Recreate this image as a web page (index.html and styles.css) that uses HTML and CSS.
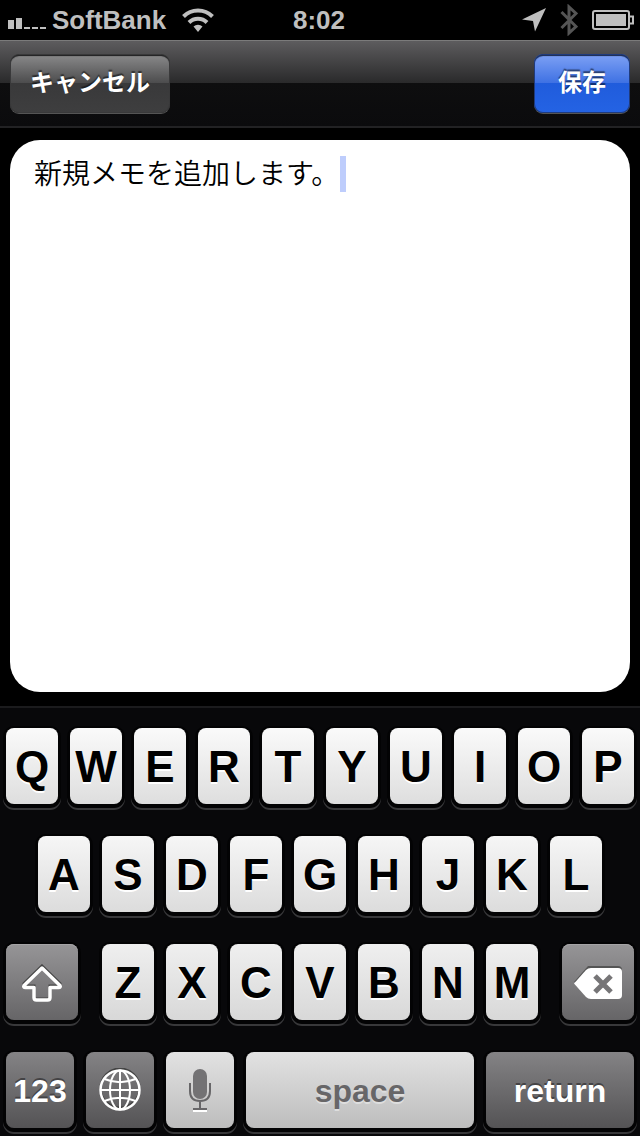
FILE: index.html
```html
<!DOCTYPE html>
<html lang="ja">
<head>
  <meta charset="UTF-8" />
  <meta name="viewport" content="width=device-width, initial-scale=1" />
  <title>新規メモ</title>
  <link rel="stylesheet" href="styles.css">
</head>
<body>
  <div class="statusbar">
    <div class="status-left">
      <svg class="signal" width="38" height="12" viewBox="0 0 38 12">
        <path d="M0 3h6v9H0zM8 1h6v11H8zM16 10h6v2h-6zM24 10h6v2h-6zM32 10h6v2h-6z" />
      </svg>
      <span>SoftBank</span>
      <svg class="wifi" width="32" height="24" viewBox="0 0 32 24">
        <path d="M1.5 8.5a20.500 20.500 0 0 1 29 0" fill="none" stroke="#bfbfbf" stroke-width="4" />
        <path d="M7 14.500a12.700 12.700 0 0 1 18 0" fill="none" stroke="#bfbfbf" stroke-width="4" />
        <path d="M11.500 18.500a6.500 6.500 0 0 1 9 0L16 24z" />
      </svg>
    </div>
    <time>8:02</time>
    <div class="status-right">
      <svg width="24" height="24" viewBox="0 0 24 24">
        <path d="M24 0L13 23.500L11 13L0 11.500z" />
      </svg>
      <svg width="18" height="32" viewBox="0 0 18 32">
        <path d="M1.500 8L16 22.500L9 29V3L16 9.500L1.500 24" fill="none" stroke="#555" stroke-width="3" />
      </svg>
      <svg width="42" height="20" viewBox="0 0 42 20">
        <rect x="1" y="1" width="36" height="18" rx="2" fill="none" stroke="#bfbfbf" stroke-width="2" />
        <path d="M4 4h30v12H4z" />
        <path d="M38 6.500h3v7h-3" fill="none" stroke="#bfbfbf" stroke-width="2" />
      </svg>
    </div>
  </div>

  <header class="navbar">
    <button class="nav-btn" type="button">キャンセル</button>
    <button class="nav-btn save" type="button">保存</button>
  </header>

  <main class="memo">
    <textarea id="memo" aria-label="メモ" spellcheck="false">新規メモを追加します。</textarea>
    <span class="caret"></span>
  </main>

  <div class="keyboard">
    <div class="row row1">
      <button class="key">Q</button>
      <button class="key">W</button>
      <button class="key">E</button>
      <button class="key">R</button>
      <button class="key">T</button>
      <button class="key">Y</button>
      <button class="key">U</button>
      <button class="key">I</button>
      <button class="key">O</button>
      <button class="key">P</button>
    </div>
    <div class="row row2">
      <button class="key">A</button>
      <button class="key">S</button>
      <button class="key">D</button>
      <button class="key">F</button>
      <button class="key">G</button>
      <button class="key">H</button>
      <button class="key">J</button>
      <button class="key">K</button>
      <button class="key">L</button>
    </div>
    <div class="row row3">
      <button class="key dark mid" aria-label="shift">
        <svg width="42" height="38" viewBox="0 0 42 38">
          <path d="M21 2L39 19.500Q40 22 37.500 22H29V32.500Q29 35 26.500 35H15.500Q13 35 13 32.500V22H4.500Q2 22 3 19.500z" fill="none" stroke="#444" stroke-width="3" />
          <path d="M21 4L39 21.500Q40 23.500 37.500 23.500H29V33.500Q29 36 26.500 36H15.500Q13 36 13 33.500V23.500H4.500Q2 23.500 3 21.500z" fill="none" stroke="#fff" stroke-width="3.500" stroke-linejoin="round" />
        </svg>
      </button>
      <div class="letters">
        <button class="key">Z</button>
        <button class="key">X</button>
        <button class="key">C</button>
        <button class="key">V</button>
        <button class="key">B</button>
        <button class="key">N</button>
        <button class="key">M</button>
      </div>
      <button class="key dark mid" aria-label="delete">
        <svg width="48" height="34" viewBox="0 0 48 34">
          <path d="M14 0H44Q48 0 48 4V16H0z" fill="#555" />
          <path d="M0 17.500L12 4Q14 2 17 2H44Q48 2 48 6V29Q48 33 44 33H17Q14 33 12 31z" fill="#fff" />
          <path d="M21 10L37 26M37 10L21 26" stroke="#767577" stroke-width="5" />
        </svg>
      </button>
    </div>
    <div class="row row4">
      <button class="key dark small">123</button>
      <button class="key dark small" aria-label="globe">
        <svg width="42" height="46" viewBox="0 0 42 46">
          <circle cx="21" cy="20" r="19.500" fill="none" stroke="#444" stroke-width="2" />
          <g fill="none" stroke="#fff" stroke-width="2">
            <circle cx="21" cy="22" r="19.500" stroke-width="2.500" />
            <ellipse cx="21" cy="22" rx="10" ry="19.500" />
            <path d="M21 2V42M1 22H41M5.500 11Q21 17.500 36.500 11M5.500 33Q21 26.500 36.500 33" />
          </g>
        </svg>
      </button>
      <button class="key light small" aria-label="mic">
        <svg width="24" height="46" viewBox="0 0 24 46">
          <path d="M5 43H19" stroke="#fff" stroke-width="2" />
          <rect x="5" y="1" width="14" height="30" rx="7" fill="#737274" />
          <path d="M2 15V23Q2 33 12 33Q22 33 22 23V15M12 33V40M5 41H19" fill="none" stroke="#676668" stroke-width="2" />
        </svg>
      </button>
      <button class="key light space">space</button>
      <button class="key dark return">return</button>
    </div>
  </div>
</body>
</html>
```
FILE: styles.css
```css
* { box-sizing: border-box; }
body {
  margin: 0;
  min-height: 100vh;
  display: flex;
  flex-direction: column;
  background: #000;
  font-family: "Liberation Sans", "Noto Sans CJK JP", sans-serif;
}
button { border: none; padding: 0; font-family: inherit; cursor: pointer; }
svg { display: block; }

/* status bar */
.statusbar {
  display: grid;
  grid-template-columns: 1fr auto 1fr;
  align-items: center;
  height: 40px;
  padding: 0 6px 0 4px;
  color: #bfbfbf;
  fill: #bfbfbf;
  font-size: 26px;
  font-weight: bold;
}
.status-left, .status-right { display: flex; align-items: center; }
.signal { margin: 6px 6px 0 4px; }
.wifi { margin-left: 16px; }
.status-right { justify-content: flex-end; gap: 14px; }

/* navigation bar */
.navbar {
  display: flex;
  justify-content: space-between;
  align-items: flex-start;
  height: 88px;
  padding: 13px 10px 0;
  border-top: 1px solid #7b7b7b;
  border-bottom: 2px solid #222224;
  background: linear-gradient(#5d5c5e, #29292a 50%, #0e0e0f 50%, #0b0b0d);
}
.nav-btn {
  height: 59px;
  padding: 0 20px 6px;
  border-radius: 9px;
  color: #fff;
  font-family: "Noto Sans CJK JP", sans-serif;
  font-size: 24px;
  font-weight: bold;
  text-shadow: 0 -2px 1px rgba(0, 0, 0, .5);
  background: linear-gradient(#8b8b8c, #4b4b4c 50%, #39393a 50%, #3e3e3f);
  box-shadow: inset 0 0 0 1px #39393a, inset 0 2px 1px #1b1b1c, 0 1px 0 #555;
}
.save {
  padding: 0 24px 6px;
  background: linear-gradient(#7fa2f5, #3d70e3 50%, #205cdc 50%, #2463e4);
  box-shadow: inset 0 0 0 1px #203b7c, inset 0 2px 1px #16254b, 0 1px 0 #555;
}

/* memo */
.memo {
  position: relative;
  flex: 1;
  display: flex;
  padding: 12px 10px 14px;
}
textarea {
  flex: 1;
  min-width: 0;
  padding: 14px 24px;
  border: none;
  border-radius: 30px;
  outline: none;
  resize: none;
  background: #fff;
  color: #000;
  font-family: "Noto Sans CJK JP", sans-serif;
  font-size: 28px;
  font-weight: 350;
  line-height: 36px;
}
.caret {
  position: absolute;
  left: 340px;
  top: 28px;
  width: 6px;
  height: 36px;
  background: #becdfc;
}

/* keyboard */
.keyboard {
  display: flex;
  flex-direction: column;
  gap: 32px;
  padding: 20px 6px 8px;
  border-top: 2px solid #1b1b1d;
  background: #08080a;
}
.row, .letters { display: flex; gap: 12px; }
.row2 { padding: 0 32px; }
.row3 { gap: 24px; }
.letters { flex: 436 1 0; }
.key {
  display: flex;
  flex: 1 1 0;
  min-width: 0;
  height: 76px;
  padding-top: 2px;
  align-items: center;
  justify-content: center;
  border-radius: 8px;
  color: #000;
  font-size: 44px;
  font-weight: bold;
  text-shadow: 0 2px 0 #fff;
  background: linear-gradient(#fafafa, #dedede);
  box-shadow: 0 1px 0 3px #030304, 0 3px 0 3px #38383a;
}
.row2 .key { background: linear-gradient(#f6f6f6, #dcdcdc); }
.row3 .key { background: linear-gradient(#efefef, #d8d8d8); }
.row3 .mid {
  flex: 72 1 0;
  background: linear-gradient(#969597, #666567);
  box-shadow: inset 0 1px 0 #a5a4a6, 0 1px 0 3px #030304, 0 3px 0 3px #38383a;
}
.row4 .key { font-size: 32px; }
.row4 .dark {
  color: #fff;
  text-shadow: 0 -2px 0 #444345;
  background: linear-gradient(#848385, #545355);
}
.row4 .light {
  color: #676668;
  background: linear-gradient(#e2e2e2, #bdbdbd);
  text-shadow: 0 2px 0 #dedede;
}
.row4 .small { flex: 68 1 0; }
.row4 .space { flex: 228 1 0; }
.row4 .return { flex: 148 1 0; }
```
